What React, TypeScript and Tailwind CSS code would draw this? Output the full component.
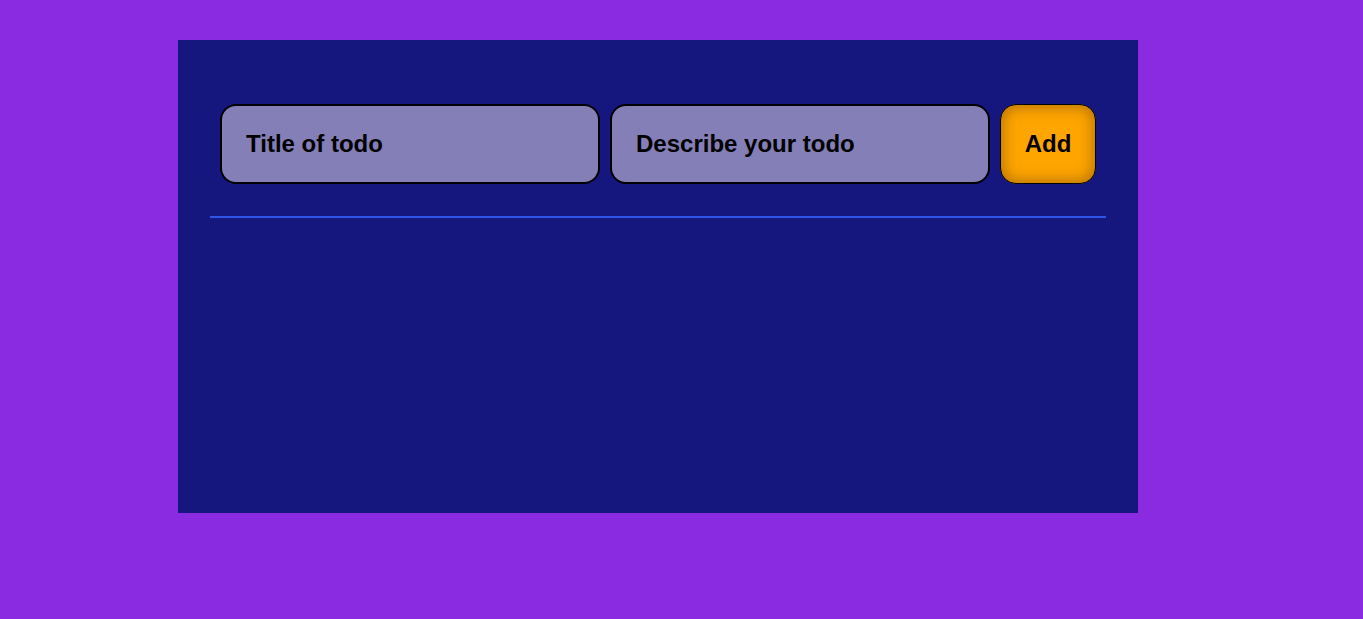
export default function App() {
  return (
    <div className="min-h-[619px] bg-[#8a2be2] pt-[40px] pl-[178px] font-['Liberation_Sans',Arial,sans-serif]">
      <div className="w-[960px] h-[473px] bg-[#15177f] px-[32px] pt-[54px]">
        {/* Form row */}
        <div className="flex gap-[10px] p-[10px]">
          <input
            className="w-[380px] h-[80px] rounded-[16px] border-2 border-black bg-[#857fb8] pl-[24px] text-[24px] font-bold text-black placeholder:text-black outline-none"
            placeholder="Title of todo"
          />
          <input
            className="w-[380px] h-[80px] rounded-[16px] border-2 border-black bg-[#857fb8] pl-[24px] text-[24px] font-bold text-black placeholder:text-black outline-none"
            placeholder="Describe your todo"
          />
          <button className="w-[96px] h-[80px] rounded-[16px] border border-black bg-[#ffa500] text-[24px] font-bold text-black shadow-[inset_0_0_14px_3px_rgba(0,0,0,0.28)]">
            Add
          </button>
        </div>
        <hr className="mt-[22px] border-0 border-t-2 border-[#2f55e6]" />
      </div>
    </div>
  );
}
